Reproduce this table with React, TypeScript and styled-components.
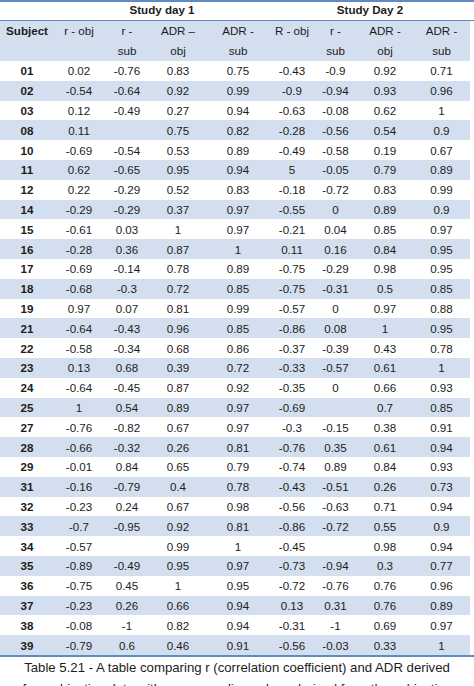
import React from "react";
import styled, { createGlobalStyle } from "styled-components";

const Global = createGlobalStyle`
  html, body { margin: 0; padding: 0; background: #ffffff; }
  body { font-family: "Liberation Sans", Arial, sans-serif; color: #1c1c1c; }
`;

const COLS = "54px 50px 46px 56px 64px 44px 43px 56px 57px";
const SHADE = "#d3dfee";
const LINE = "#5f8bc2";

const Page = styled.div`
  width: 474px;
  overflow: hidden;
`;

const Table = styled.div`
  display: flex;
  flex-direction: column;
  border-top: 2px solid ${LINE};
  border-bottom: 2px solid ${LINE};
  font-size: 11.6px;
`;

const GroupRow = styled.div`
  display: grid;
  grid-template-columns: 54px 216px 200px;
  height: 18px;
  align-items: center;
  border-bottom: 1px solid ${LINE};
  font-weight: bold;
`;

const GroupCell = styled.div`
  text-align: center;
  padding-bottom: 4px;
`;

const Row = styled.div<{ $shaded: boolean; $h: number }>`
  display: grid;
  grid-template-columns: ${COLS};
  height: ${(p) => p.$h}px;
  align-items: center;
  background: ${(p) =>
    p.$shaded
      ? `linear-gradient(to right, ${SHADE} 470px, transparent 470px)`
      : "transparent"};
`;

const HeadCell = styled.div<{ $bold?: boolean }>`
  align-self: stretch;
  display: flex;
  flex-direction: column;
  align-items: center;
  font-weight: ${(p) => (p.$bold ? "bold" : "normal")};
  padding-top: 0px;
  line-height: 20px;
`;

const Cell = styled.div<{ $bold?: boolean }>`
  text-align: center;
  font-weight: ${(p) => (p.$bold ? "bold" : "normal")};
`;

const Caption = styled.p`
  margin: 0;
  font-size: 13.2px;
  line-height: 21px;
  text-align: center;
  color: #1c1c1c;
  white-space: nowrap;
`;

const headers: string[][] = [
  ["Subject"],
  ["r - obj"],
  ["r -", "sub"],
  ["ADR \u2013", "obj"],
  ["ADR -", "sub"],
  ["R - obj"],
  ["r -", "sub"],
  ["ADR -", "obj"],
  ["ADR -", "sub"],
];

const data: string[][] = [
  ["01", "0.02", "-0.76", "0.83", "0.75", "-0.43", "-0.9", "0.92", "0.71"],
  ["02", "-0.54", "-0.64", "0.92", "0.99", "-0.9", "-0.94", "0.93", "0.96"],
  ["03", "0.12", "-0.49", "0.27", "0.94", "-0.63", "-0.08", "0.62", "1"],
  ["08", "0.11", "", "0.75", "0.82", "-0.28", "-0.56", "0.54", "0.9"],
  ["10", "-0.69", "-0.54", "0.53", "0.89", "-0.49", "-0.58", "0.19", "0.67"],
  ["11", "0.62", "-0.65", "0.95", "0.94", "5", "-0.05", "0.79", "0.89"],
  ["12", "0.22", "-0.29", "0.52", "0.83", "-0.18", "-0.72", "0.83", "0.99"],
  ["14", "-0.29", "-0.29", "0.37", "0.97", "-0.55", "0", "0.89", "0.9"],
  ["15", "-0.61", "0.03", "1", "0.97", "-0.21", "0.04", "0.85", "0.97"],
  ["16", "-0.28", "0.36", "0.87", "1", "0.11", "0.16", "0.84", "0.95"],
  ["17", "-0.69", "-0.14", "0.78", "0.89", "-0.75", "-0.29", "0.98", "0.95"],
  ["18", "-0.68", "-0.3", "0.72", "0.85", "-0.75", "-0.31", "0.5", "0.85"],
  ["19", "0.97", "0.07", "0.81", "0.99", "-0.57", "0", "0.97", "0.88"],
  ["21", "-0.64", "-0.43", "0.96", "0.85", "-0.86", "0.08", "1", "0.95"],
  ["22", "-0.58", "-0.34", "0.68", "0.86", "-0.37", "-0.39", "0.43", "0.78"],
  ["23", "0.13", "0.68", "0.39", "0.72", "-0.33", "-0.57", "0.61", "1"],
  ["24", "-0.64", "-0.45", "0.87", "0.92", "-0.35", "0", "0.66", "0.93"],
  ["25", "1", "0.54", "0.89", "0.97", "-0.69", "", "0.7", "0.85"],
  ["27", "-0.76", "-0.82", "0.67", "0.97", "-0.3", "-0.15", "0.38", "0.91"],
  ["28", "-0.66", "-0.32", "0.26", "0.81", "-0.76", "0.35", "0.61", "0.94"],
  ["29", "-0.01", "0.84", "0.65", "0.79", "-0.74", "0.89", "0.84", "0.93"],
  ["31", "-0.16", "-0.79", "0.4", "0.78", "-0.43", "-0.51", "0.26", "0.73"],
  ["32", "-0.23", "0.24", "0.67", "0.98", "-0.56", "-0.63", "0.71", "0.94"],
  ["33", "-0.7", "-0.95", "0.92", "0.81", "-0.86", "-0.72", "0.55", "0.9"],
  ["34", "-0.57", "", "0.99", "1", "-0.45", "", "0.98", "0.94"],
  ["35", "-0.89", "-0.49", "0.95", "0.97", "-0.73", "-0.94", "0.3", "0.77"],
  ["36", "-0.75", "0.45", "1", "0.95", "-0.72", "-0.76", "0.76", "0.96"],
  ["37", "-0.23", "0.26", "0.66", "0.94", "0.13", "0.31", "0.76", "0.89"],
  ["38", "-0.08", "-1", "0.82", "0.94", "-0.31", "-1", "0.69", "0.97"],
  ["39", "-0.79", "0.6", "0.46", "0.91", "-0.56", "-0.03", "0.33", "1"],
];

export default function App() {
  return (
    <Page>
      <Global />
      <Table>
        <GroupRow>
          <GroupCell />
          <GroupCell>Study day 1</GroupCell>
          <GroupCell>Study Day 2</GroupCell>
        </GroupRow>
        <Row $shaded $h={40}>
          {headers.map((lines, i) => (
            <HeadCell key={i} $bold={i === 0}>
              {lines.map((l, j) => (
                <span key={j}>{l}</span>
              ))}
            </HeadCell>
          ))}
        </Row>
        {data.map((row, r) => (
          <Row key={r} $shaded={r % 2 === 1} $h={19.8}>
            {row.map((v, c) => (
              <Cell key={c} $bold={c === 0}>
                {v}
              </Cell>
            ))}
          </Row>
        ))}
      </Table>
      <Caption>
        Table 5.21 - A table comparing r (correlation coefficient) and ADR derived
        <br />
        from objective data with corresponding values derived from the subjective
      </Caption>
    </Page>
  );
}
